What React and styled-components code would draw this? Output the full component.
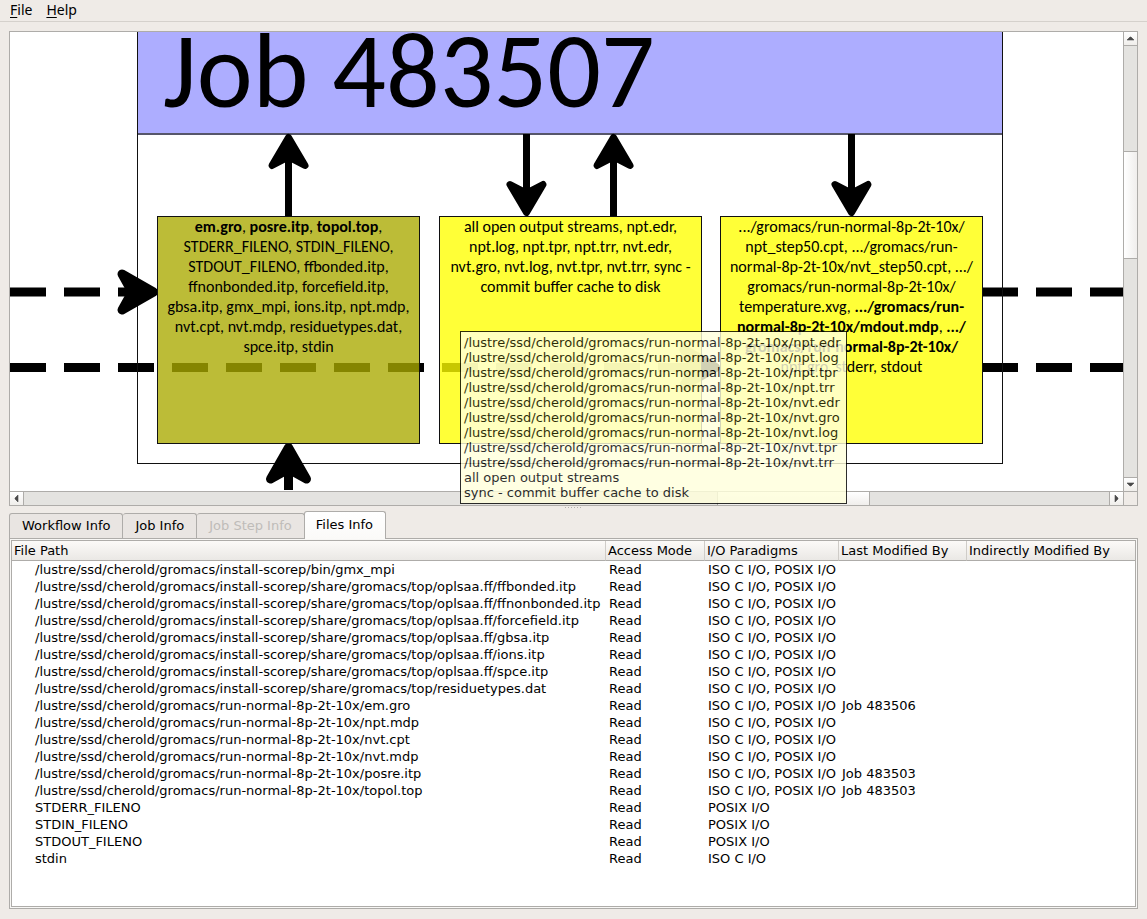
import React from "react";
import styled, { createGlobalStyle, css } from "styled-components";

const GlobalStyle = createGlobalStyle`
  * { box-sizing: border-box; }
  body {
    margin: 0;
    background: #efebe7;
    color: #000;
    font: 13px/17px "DejaVu Sans", sans-serif;
  }
  button { font: inherit; color: inherit; padding: 0; margin: 0; border: 0; background: none; }
`;

const line = "#aeaca9";

const Window = styled.div`
  display: flex;
  flex-direction: column;
  min-height: 100vh;
`;

const MenuBar = styled.nav`
  display: flex;
  align-items: flex-start;
  height: 22px;
  padding-left: 3px;
  border-bottom: 1px solid #d5d1cc;
`;

const MenuButton = styled.button`
  padding: 0 7px;
  font: 14px/20px "Noto Sans", sans-serif;
  u { text-underline-offset: 2px; }
`;

const Main = styled.main`
  flex: 1;
  display: flex;
  flex-direction: column;
  padding: 9px 9px 10px;
`;

const Viewer = styled.section`
  position: relative;
  flex: 474 1 0;
  display: flex;
  flex-direction: column;
  border: 1px solid ${line};
  background: #fff;
`;

const ViewerRow = styled.div`
  flex: 1;
  display: flex;
`;

const Canvas = styled.div`
  position: relative;
  flex: 1;
  overflow: hidden;
  font-family: Carlito, Lato, sans-serif;
`;

const Edges = styled.svg`
  position: absolute;
  inset: 0;
  width: 100%;
  height: 100%;
`;

const JobFrame = styled.div`
  position: absolute;
  left: 127px;
  top: -40px;
  width: 866px;
  height: 472px;
  border: 1px solid #111;
`;

const JobTitle = styled.h1`
  margin: 0;
  height: 142px;
  padding: 18px 0 0 25px;
  border-bottom: 2px solid #56566a;
  background: rgba(150, 150, 255, 0.784);
  font-weight: 400;
  font-size: 106px;
  line-height: 120px;
  white-space: nowrap;
`;

const FileBox = styled.div`
  position: absolute;
  left: ${(p) => p.$x}px;
  top: 184px;
  width: 263px;
  height: 228px;
  border: 1px solid #111;
  background: ${(p) => (p.$selected ? "rgba(170,170,0,.784)" : "rgba(255,255,0,.784)")};
  font-size: 16px;
  line-height: 20px;
  text-align: center;
`;

const FileLine = styled.div`
  white-space: nowrap;
`;

const Tooltip = styled.div`
  position: absolute;
  left: 450px;
  top: 299px;
  padding: 3px;
  width: 387px;
  border: 1px solid #000;
  background: #ffffdc;
  opacity: 0.82;
  line-height: 15px;
  white-space: nowrap;
`;

const ScrollTrack = styled.div`
  display: flex;
  background: #e4e3e0;
  ${(p) =>
    p.$vertical
      ? css`flex-direction: column; width: 14px; border-left: 1px solid ${line};`
      : css`flex: 1; height: 14px; border-top: 1px solid ${line};`}
`;

const ScrollButton = styled.button`
  display: flex;
  align-items: center;
  justify-content: center;
  flex: none;
  width: 13px;
  height: 13px;
  background: linear-gradient(#fff, #f0eeeb);
`;

const Trough = styled.div`
  flex: ${(p) => p.$size} 1 0;
`;

const Thumb = styled.div`
  flex: ${(p) => p.$size} 1 0;
  background: linear-gradient(${(p) => (p.$vertical ? "90deg" : "180deg")}, #fff, #f0eeec);
  ${(p) =>
    p.$vertical
      ? css`border-top: 1px solid ${line}; border-bottom: 1px solid ${line};`
      : css`border-left: 1px solid ${line}; border-right: 1px solid ${line};`}
`;

const Divider = styled.div`
  flex: none;
  background: ${line};
  ${(p) => (p.$vertical ? css`height: 1px;` : css`width: 1px;`)}
`;

const ScrollFooter = styled.div`
  display: flex;
`;

const Corner = styled.div`
  width: 14px;
  border-left: 1px solid ${line};
  border-top: 1px solid ${line};
  background: #efebe7;
`;

const Splitter = styled.div`
  flex: none;
  display: flex;
  justify-content: center;
  height: 4px;
  padding-top: 1px;
`;

const Grip = styled.span`
  width: 17px;
  height: 1px;
  background: repeating-linear-gradient(90deg, #b5b2ae 0 1px, transparent 1px 3px);
`;

const InfoPane = styled.section`
  flex: 400 1 0;
  display: flex;
  flex-direction: column;
`;

const TabBar = styled.div`
  display: flex;
  align-items: flex-end;
  height: 28px;
`;

const Tab = styled.button`
  height: 25px;
  padding: 0 12px;
  border: 1px solid ${line};
  border-bottom: 0;
  border-left-width: ${(p) => (p.$first ? 1 : 0)}px;
  border-radius: 3px 3px 0 0;
  background: #e9e5e2;
  color: ${(p) => (p.disabled ? "#bfbcb9" : "#000")};
  ${(p) =>
    p.$active &&
    css`
      position: relative;
      height: 28px;
      margin: 0 0 -1px -1px;
      padding: 0 12px 2px 11px;
      border-left-width: 1px;
      background: linear-gradient(#fff, #fbfaf8);
    `}
`;

const TablePanel = styled.div`
  flex: 1;
  display: flex;
  padding: 1px;
  border: 1px solid ${line};
  background: #f8f7f5;
`;

const TableFrame = styled.div`
  flex: 1;
  border: 1px solid ${line};
  background: #fff;
`;

const Table = styled.table`
  width: 100%;
  table-layout: fixed;
  border-collapse: separate;
  border-spacing: 0;
  white-space: nowrap;
`;

const HeadCell = styled.th`
  width: ${(p) => (p.$width ? `${p.$width}px` : "auto")};
  height: 20px;
  padding: 0 2px;
  border-bottom: 1px solid ${line};
  border-right: ${(p) => (p.$width ? "1px solid #cfccc8" : "0")};
  background: linear-gradient(#fcfaf8, #eae8e5);
  font-weight: 400;
  text-align: left;
`;

const Cell = styled.td`
  height: 17px;
  padding: 0 0 0 3px;
  &:first-child { padding-left: 23px; }
`;

const ARROWS = { up: "M3 8L6 5H7L10 8Z", down: "M3 5H10L7 8H6Z", left: "M8 3V10L5 7V6Z", right: "M5 3V10L8 7V6Z" };

function ArrowButton({ dir }) {
  return (
    <ScrollButton aria-label={`Scroll ${dir}`}>
      <svg width="13" height="13" viewBox="0 0 13 13">
        <path d={ARROWS[dir]} fill="#4a4a4a" stroke="#4a4a4a" strokeWidth=".6" />
      </svg>
    </ScrollButton>
  );
}

function ScrollBar({ vertical, parts }) {
  return (
    <ScrollTrack $vertical={vertical}>
      <ArrowButton dir={vertical ? "up" : "left"} />
      <Divider $vertical={vertical} />
      <Trough $size={parts[0]} />
      <Thumb $size={parts[1]} $vertical={vertical} />
      <Trough $size={parts[2]} />
      <Divider $vertical={vertical} />
      <ArrowButton dir={vertical ? "down" : "right"} />
    </ScrollTrack>
  );
}

function ShortArrow({ x, y, turn = 0 }) {
  return (
    <g transform={`translate(${x} ${y}) rotate(${turn})`} strokeWidth="7" strokeLinejoin="round">
      <path d="M0 3.5L16.5 31.5L0 23L-16.5 31.5Z" />
      <path d="M0 25V82" />
    </g>
  );
}

function LargeHead({ x, y, turn = 0 }) {
  return (
    <path
      transform={`translate(${x} ${y}) rotate(${turn})`}
      strokeWidth="9"
      strokeLinejoin="round"
      d="M0 4.5L18 36L0 26L-18 36Z"
    />
  );
}

const BOXES = [
  {
    x: 147,
    selected: true,
    lines: [
      <><b>em.gro</b>, <b>posre.itp</b>, <b>topol.top</b>,</>,
      "STDERR_FILENO, STDIN_FILENO,",
      "STDOUT_FILENO, ffbonded.itp,",
      "ffnonbonded.itp, forcefield.itp,",
      "gbsa.itp, gmx_mpi, ions.itp, npt.mdp,",
      "nvt.cpt, nvt.mdp, residuetypes.dat,",
      "spce.itp, stdin",
    ],
  },
  {
    x: 429,
    lines: [
      "all open output streams, npt.edr,",
      "npt.log, npt.tpr, npt.trr, nvt.edr,",
      "nvt.gro, nvt.log, nvt.tpr, nvt.trr, sync -",
      "commit buffer cache to disk",
    ],
  },
  {
    x: 710,
    lines: [
      ".../gromacs/run-normal-8p-2t-10x/",
      "npt_step50.cpt, .../gromacs/run-",
      "normal-8p-2t-10x/nvt_step50.cpt, .../",
      "gromacs/run-normal-8p-2t-10x/",
      <>temperature.xvg, <b>.../gromacs/run-</b></>,
      <><b>normal-8p-2t-10x/mdout.mdp</b>, <b>.../</b></>,
      <b>gromacs/run-normal-8p-2t-10x/</b>,
      "npt.gro, stderr, stdout",
    ],
  },
];

const RUN = "/lustre/ssd/cherold/gromacs/run-normal-8p-2t-10x/";
const INSTALL = "/lustre/ssd/cherold/gromacs/install-scorep/";
const TOP = INSTALL + "share/gromacs/top/";

const TOOLTIP = [
  ...["npt.edr", "npt.log", "npt.tpr", "npt.trr", "nvt.edr", "nvt.gro", "nvt.log", "nvt.tpr", "nvt.trr"].map((f) => RUN + f),
  "all open output streams",
  "sync - commit buffer cache to disk",
];

const BOTH = "ISO C I/O, POSIX I/O";
const ROWS = [
  [INSTALL + "bin/gmx_mpi", BOTH],
  [TOP + "oplsaa.ff/ffbonded.itp", BOTH],
  [TOP + "oplsaa.ff/ffnonbonded.itp", BOTH],
  [TOP + "oplsaa.ff/forcefield.itp", BOTH],
  [TOP + "oplsaa.ff/gbsa.itp", BOTH],
  [TOP + "oplsaa.ff/ions.itp", BOTH],
  [TOP + "oplsaa.ff/spce.itp", BOTH],
  [TOP + "residuetypes.dat", BOTH],
  [RUN + "em.gro", BOTH, "Job 483506"],
  [RUN + "npt.mdp", BOTH],
  [RUN + "nvt.cpt", BOTH],
  [RUN + "nvt.mdp", BOTH],
  [RUN + "posre.itp", BOTH, "Job 483503"],
  [RUN + "topol.top", BOTH, "Job 483503"],
  ["STDERR_FILENO", "POSIX I/O"],
  ["STDIN_FILENO", "POSIX I/O"],
  ["STDOUT_FILENO", "POSIX I/O"],
  ["stdin", "ISO C I/O"],
];

export default function App() {
  return (
    <Window>
      <GlobalStyle />
      <MenuBar>
        <MenuButton><u>F</u>ile</MenuButton>
        <MenuButton><u>H</u>elp</MenuButton>
      </MenuBar>
      <Main>
        <Viewer>
          <ViewerRow>
            <Canvas>
              <Edges stroke="#000" fill="#000">
                <g strokeWidth="9" strokeDasharray="36 18">
                  <path d="M0 260H118" />
                  <path d="M0 335.5H690" />
                  <path d="M972 260H4000" />
                  <path d="M972 335.5H4000" />
                </g>
              </Edges>
              <JobFrame>
                <JobTitle>Job 483507</JobTitle>
              </JobFrame>
              <Edges stroke="#000" fill="#000">
                <ShortArrow x={278.5} y={102} />
                <ShortArrow x={516.5} y={184} turn={180} />
                <ShortArrow x={603.5} y={102} />
                <ShortArrow x={841.5} y={184} turn={180} />
                <LargeHead x={148} y={260} turn={90} />
                <LargeHead x={710} y={335.5} turn={90} />
                <LargeHead x={278.5} y={411} />
                <path d="M278.5 440V458" strokeWidth="9" />
              </Edges>
              {BOXES.map((box) => (
                <FileBox key={box.x} $x={box.x} $selected={box.selected}>
                  {box.lines.map((text, i) => (
                    <FileLine key={i}>{text}</FileLine>
                  ))}
                </FileBox>
              ))}
            </Canvas>
            <ScrollBar vertical parts={[106, 106, 220]} />
          </ViewerRow>
          <ScrollFooter>
            <ScrollBar parts={[695, 151, 240]} />
            <Corner />
          </ScrollFooter>
          <Tooltip role="tooltip">
            {TOOLTIP.map((text) => (
              <div key={text}>{text}</div>
            ))}
          </Tooltip>
        </Viewer>
        <Splitter><Grip /></Splitter>
        <InfoPane>
          <TabBar role="tablist">
            <Tab role="tab" $first>Workflow Info</Tab>
            <Tab role="tab">Job Info</Tab>
            <Tab role="tab" disabled>Job Step Info</Tab>
            <Tab role="tab" $active aria-selected="true">Files Info</Tab>
          </TabBar>
          <TablePanel>
            <TableFrame>
              <Table>
                <thead>
                  <tr>
                    <HeadCell $width={594}>File Path</HeadCell>
                    <HeadCell $width={99}>Access Mode</HeadCell>
                    <HeadCell $width={134}>I/O Paradigms</HeadCell>
                    <HeadCell $width={128}>Last Modified By</HeadCell>
                    <HeadCell>Indirectly Modified By</HeadCell>
                  </tr>
                </thead>
                <tbody>
                  {ROWS.map(([path, io, job]) => (
                    <tr key={path}>
                      <Cell>{path}</Cell>
                      <Cell>Read</Cell>
                      <Cell>{io}</Cell>
                      <Cell>{job}</Cell>
                      <Cell />
                    </tr>
                  ))}
                </tbody>
              </Table>
            </TableFrame>
          </TablePanel>
        </InfoPane>
      </Main>
    </Window>
  );
}
